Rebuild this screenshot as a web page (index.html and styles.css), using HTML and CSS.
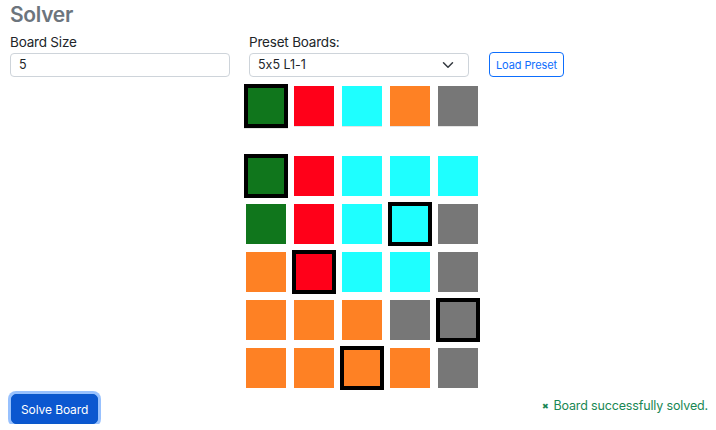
FILE: index.html
```html
<!DOCTYPE html>
<html lang="en">
<head>
<meta charset="utf-8">
<title>Solver</title>
<link rel="stylesheet" href="styles.css">
</head>
<body>
<div class="page">
  <h1 class="title">Solver</h1>
  <div class="form-row">
    <div class="field">
      <label class="label">Board Size</label>
      <div class="input">5</div>
    </div>
    <div class="field field-preset">
      <label class="label">Preset Boards:</label>
      <div class="select">
        <span>5x5 L1-1</span>
        <svg class="chev" width="16" height="12" viewBox="0 0 16 16"><path d="m2 5 6 6 6-6" fill="none" stroke="#343a40" stroke-width="2" stroke-linecap="round" stroke-linejoin="round"/></svg>
      </div>
    </div>
    <button class="btn-outline">Load Preset</button>
  </div>

  <div class="board board-top">
    <div class="cell green sel"></div>
    <div class="cell red"></div>
    <div class="cell cyan"></div>
    <div class="cell orange"></div>
    <div class="cell gray"></div>
  </div>

  <div class="board board-main">
    <div class="cell green sel"></div>
    <div class="cell red"></div>
    <div class="cell cyan"></div>
    <div class="cell cyan"></div>
    <div class="cell cyan"></div>

    <div class="cell green"></div>
    <div class="cell red"></div>
    <div class="cell cyan"></div>
    <div class="cell cyan sel"></div>
    <div class="cell gray"></div>

    <div class="cell orange"></div>
    <div class="cell red sel"></div>
    <div class="cell cyan"></div>
    <div class="cell cyan"></div>
    <div class="cell gray"></div>

    <div class="cell orange"></div>
    <div class="cell orange"></div>
    <div class="cell orange"></div>
    <div class="cell gray"></div>
    <div class="cell gray sel"></div>

    <div class="cell orange"></div>
    <div class="cell orange"></div>
    <div class="cell orange sel"></div>
    <div class="cell orange"></div>
    <div class="cell gray"></div>
  </div>

  <div class="bottom-row">
    <button class="btn-primary">Solve Board</button>
    <div class="success"><span class="x">&#x2716;</span> Board successfully solved.</div>
  </div>
</div>
</body>
</html>
```

FILE: styles.css
```css
* { box-sizing: border-box; }

body {
  margin: 0;
  font-family: Inter, "Noto Sans", sans-serif;
  font-feature-settings: "calt" 0;
  color: #212529;
  background: #fff;
}

.page {
  padding: 0 8px 0 10px;
}

.title {
  margin: 2px 0 0 0;
  font-size: 21px;
  line-height: 26px;
  font-weight: 600;
  letter-spacing: -0.3px;
  color: #6c757d;
}

.form-row {
  display: flex;
  align-items: flex-end;
  margin-top: 4px;
}

.field {
  display: flex;
  flex-direction: column;
  width: 220px;
}

.field-preset {
  margin-left: 19px;
}

.label {
  font-size: 13.5px;
  line-height: 20px;
  margin-bottom: 1px;
  letter-spacing: -0.2px;
}

.input,
.select {
  height: 24px;
  border: 1px solid #ced4da;
  border-radius: 4px;
  padding: 0 8px;
  font-size: 12.5px;
  line-height: 22px;
  background: #fff;
}

.select {
  display: flex;
  align-items: center;
  justify-content: space-between;
  padding-right: 12px;
}

.chev {
  display: block;
}

.btn-outline {
  margin-left: 20px;
  height: 25px;
  padding: 0 6px;
  border: 1px solid #0d6efd;
  border-radius: 4px;
  background: #fff;
  color: #0d6efd;
  font-family: inherit;
  font-feature-settings: "calt" 0;
  font-size: 11px;
  letter-spacing: -0.1px;
}

.board {
  display: grid;
  grid-template-columns: repeat(5, 40px);
  grid-auto-rows: 40px;
  gap: 8px;
  margin-left: 236px;
}

.board-top {
  margin-top: 9px;
}

.board-top .cell {
  box-shadow: 0 1px 0 #e4e4e4;
}

.board-main {
  margin-top: 30px;
}

.cell {
  width: 40px;
  height: 40px;
}

.cell.sel {
  width: 44px;
  height: 44px;
  margin: -2px;
  border: 4px solid #000;
}

.green { background: #10761c; }
.red { background: #ff0019; }
.cyan { background: #1effff; }
.orange { background: #fe8124; }
.gray { background: #777777; }

.bottom-row {
  display: flex;
  justify-content: space-between;
  align-items: flex-start;
  margin-top: 6px;
}

.btn-primary {
  margin-left: 1px;
  height: 30px;
  padding: 0 9px;
  border: 1px solid #0a58ca;
  border-radius: 5px;
  background: #0b57d0;
  color: #fff;
  font-family: inherit;
  font-feature-settings: "calt" 0;
  font-size: 12px;
  letter-spacing: -0.1px;
  box-shadow: 0 0 0 3px rgba(49, 132, 253, 0.5);
}

.success {
  margin-top: 3px;
  font-size: 12.5px;
  line-height: 18px;
  letter-spacing: -0.15px;
  color: #198754;
}

.x {
  font-size: 8px;
  vertical-align: 1px;
  margin-right: 1px;
}
```
